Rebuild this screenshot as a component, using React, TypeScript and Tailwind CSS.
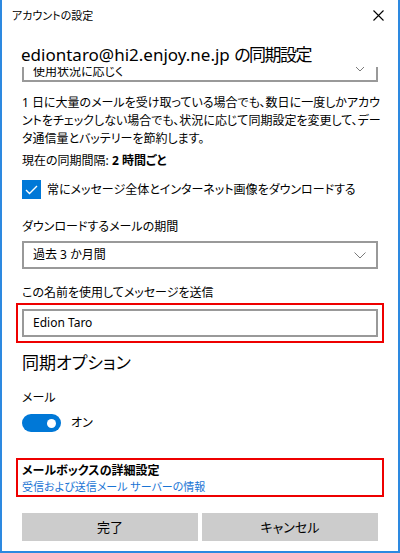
const jp = "font-['Noto_Sans','Noto_Sans_CJK_JP',sans-serif] [font-feature-settings:'palt']";

function Chevron() {
  return (
    <svg width="12" height="7" viewBox="0 0 12 7" className="shrink-0">
      <polyline points="0.5,0.5 6,6 11.5,0.5" fill="none" stroke="#7a7a7a" strokeWidth="1" />
    </svg>
  );
}

function Select({ label, clipped }: { label: string; clipped?: boolean }) {
  return (
    <div
      className={`h-[28px] border-2 border-[#999999] flex justify-between pl-[9px] pr-[10px] ${
        clipped ? "items-end pb-[2px]" : "items-center"
      }`}
    >
      <span className="text-[12px] leading-none text-black">{label}</span>
      <span className={clipped ? "mb-[6px]" : ""}>
        <Chevron />
      </span>
    </div>
  );
}

export default function App() {
  return (
    <div
      className={`${jp} w-[400px] h-[553px] bg-white border-x-2 border-b-2 border-[#2d89e0] flex flex-col text-black overflow-hidden`}
    >
      {/* title bar */}
      <div className="h-[30px] shrink-0 flex items-center justify-between pl-[10px] pr-[14px]">
        <span className="text-[11px] leading-none">アカウントの設定</span>
        <svg width="11" height="11" viewBox="0 0 11 11">
          <path d="M0.5 0.5 L10.5 10.5 M10.5 0.5 L0.5 10.5" stroke="#000" strokeWidth="1.1" />
        </svg>
      </div>

      <div className="h-[37px] shrink-0 pl-[19px] pt-[13px]">
        <h1 className="text-[17px] leading-[24px] font-normal whitespace-nowrap">
          ediontaro@hi2.enjoy.ne.jp <span className="tracking-[-1.5px]">の同期設定</span>
        </h1>
      </div>

      {/* scrolled content */}
      <div className="flex-1 overflow-hidden px-[20px]">
        <div className="-mt-[13px] flex flex-col">
          <Select label="使用状況に応じく" clipped />

          <p className="mt-[12px] text-[12px] leading-[18px] whitespace-nowrap">
            1 日に大量のメールを受け取っている場合でも、数日に一度しかアカウ
            <br />
            ントをチェックしない場合でも、状況に応じて同期設定を変更して、デー
            <br />
            タ通信量とバッテリーを節約します。
          </p>

          <p className="mt-[4px] text-[12px] leading-[18px]">
            現在の同期間隔: <span className="font-bold">2 時間ごと</span>
          </p>

          <div className="mt-[10px] flex items-center gap-[6px] h-[19px]">
            <div className="w-[19px] h-[19px] bg-[#0078d7] flex items-center justify-center shrink-0">
              <svg width="13" height="10" viewBox="0 0 13 10">
                <polyline points="1,5 4.5,8.5 12,1" fill="none" stroke="#fff" strokeWidth="1.4" />
              </svg>
            </div>
            <span className="text-[12px] leading-none whitespace-nowrap">
              常にメッセージ全体とインターネット画像をダウンロードする
            </span>
          </div>

          <p className="mt-[19px] text-[12px] leading-[18px]">ダウンロードするメールの期間</p>
          <div className="mt-[5px]">
            <Select label="過去 3 か月間" />
          </div>

          <p className="mt-[15px] text-[12px] leading-[18px]">この名前を使用してメッセージを送信</p>
          <div className="mt-[1px] -mx-[6px] border-2 border-[#ee0000] p-[4px]">
            <div className="h-[28px] border-2 border-[#999999] flex items-center pl-[9px]">
              <span className="text-[12px] leading-none">Edion Taro</span>
            </div>
          </div>

          <h2 className="mt-[8px] text-[17px] leading-[24px] font-normal">同期オプション</h2>

          <p className="mt-[14px] text-[12px] leading-[18px]">メール</p>

          <div className="mt-[7px] flex items-center gap-[10px]">
            <div className="w-[39px] h-[18px] rounded-full bg-[#0078d7] flex items-center justify-end pr-[5px]">
              <div className="w-[9px] h-[9px] rounded-full bg-white" />
            </div>
            <span className="text-[12px] leading-none">オン</span>
          </div>

          <div className="mt-[26px] -mx-[6px] border-2 border-[#ee0000] pl-[4px] pt-[3px] pb-[1px]">
            <p className="text-[12px] leading-[16px] font-bold">メールボックスの詳細設定</p>
            <p className="text-[11px] leading-[15px] text-[#1a74d4]">受信および送信メール サーバーの情報</p>
          </div>
        </div>
      </div>

      {/* footer */}
      <div className="shrink-0 px-[20px] pb-[10px] flex gap-[4px]">
        <button className="flex-1 h-[28px] bg-[#cccccc] text-[13px] leading-none text-black">完了</button>
        <button className="flex-1 h-[28px] bg-[#cccccc] text-[13px] leading-none text-black">キャンセル</button>
      </div>
    </div>
  );
}
